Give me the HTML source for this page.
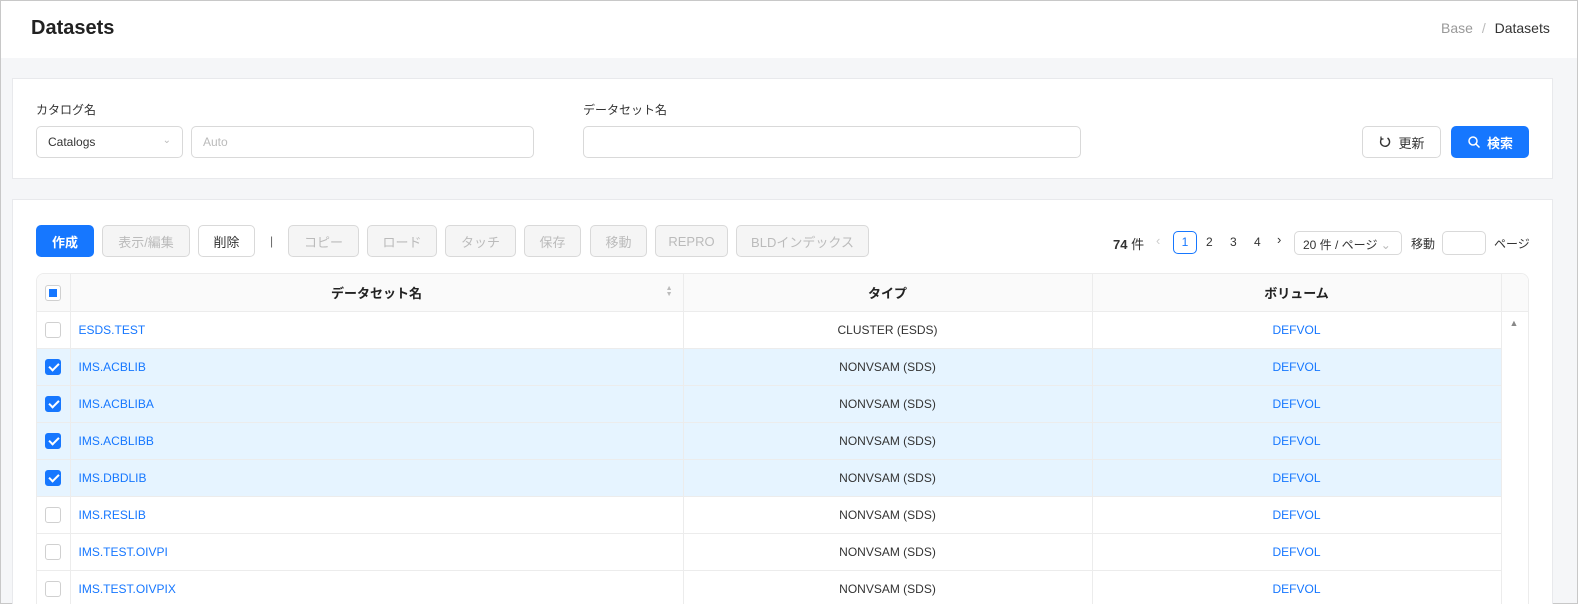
<!DOCTYPE html>
<html style="overflow:hidden;width:1578px;height:604px"><head><meta charset="utf-8"><style>
*{box-sizing:border-box;margin:0;padding:0}
html,body{overflow:hidden}
body{width:1578px;height:604px;background:#f5f6f8;font-family:"Liberation Sans","Noto Sans CJK JP",sans-serif;font-size:13px;color:#333;position:relative;border:1px solid #c8c8c8}
.abs{position:absolute}
.hdr{left:0;top:0;width:1576px;height:57px;background:#fff}
.card{background:#fff;border:1px solid #e8e9ec}
.inp{border:1px solid #d9d9d9;border-radius:5px;background:#fff;height:32px}
.btn{border:1px solid #d9d9d9;border-radius:5px;height:32px;display:flex;align-items:center;justify-content:center;font-size:13px;background:#fff}
.dis{background:#f5f5f5;color:#bbb}
.pri{background:#1677ff;border-color:#1677ff;color:#fff;font-weight:bold}
table{border-collapse:collapse;table-layout:fixed}
td,th{height:37px;border-bottom:1px solid #ececec;border-right:1px solid #ececec;font-size:12px;text-align:center}
th{background:#fafafa;font-weight:bold;color:#222;font-size:13px}
.sel td{background:#e6f4ff}
.n{text-align:left;padding-left:8px;color:#1677ff}
.v{color:#1677ff}
.cb{display:inline-block;width:16px;height:16px;border:1px solid #d0d0d0;border-radius:3px;vertical-align:middle;background:#fff}
.ck{background:#1677ff;border-color:#1677ff;position:relative}
.ck:after{content:"";position:absolute;left:4.5px;top:1.5px;width:4px;height:8px;border:solid #fff;border-width:0 2px 2px 0;transform:rotate(45deg)}
</style></head><body>
<div class="abs hdr"></div>
<div class="abs" style="left:30px;top:16px;font-size:20px;font-weight:bold;color:#222">Datasets</div>
<div class="abs" style="left:1440px;top:19px;font-size:14px;color:#999">Base <span style="margin:0 5px;color:#bbb">/</span> <span style="color:#333">Datasets</span></div>

<div class="abs card" style="left:11px;top:77px;width:1541px;height:101px"></div>
<div class="abs" style="left:35px;top:100px;font-size:12px">カタログ名</div>
<div class="abs inp" style="left:35px;top:125px;width:147px;padding:8px 11px;font-size:12px">Catalogs<span style="float:right;color:#bbb;font-size:10px">&#8964;</span></div>
<div class="abs inp" style="left:190px;top:125px;width:343px;padding:8px 11px;font-size:12px;color:#bbb">Auto</div>
<div class="abs" style="left:582px;top:100px;font-size:12px">データセット名</div>
<div class="abs inp" style="left:582px;top:125px;width:498px"></div>
<div class="abs btn" style="left:1361px;top:125px;width:79px"><svg width="14" height="14" viewBox="0 0 14 14" style="margin-right:6px"><path d="M4 3.5A4.5 4.5 0 1 0 9.5 3" fill="none" stroke="#333" stroke-width="1.4"/><path d="M3 1.5v2.5h2.5" fill="none" stroke="#333" stroke-width="1.2"/></svg>更新</div>
<div class="abs btn pri" style="left:1450px;top:125px;width:78px"><svg width="14" height="14" viewBox="0 0 14 14" style="margin-right:6px"><circle cx="6" cy="6" r="4" fill="none" stroke="#fff" stroke-width="1.5"/><path d="M9 9l3.5 3.5" stroke="#fff" stroke-width="1.5"/></svg>検索</div>

<div class="abs card" style="left:11px;top:198px;width:1541px;height:410px"></div>
<div class="abs btn pri" style="left:35px;top:224px;width:58px">作成</div>
<div class="abs btn dis" style="left:101px;top:224px;width:88px">表示/編集</div>
<div class="abs btn" style="left:197px;top:224px;width:57px">削除</div>
<div class="abs" style="left:269px;top:233px;color:#666;font-size:12px">|</div>
<div class="abs btn dis" style="left:287px;top:224px;width:71px">コピー</div>
<div class="abs btn dis" style="left:366px;top:224px;width:70px">ロード</div>
<div class="abs btn dis" style="left:444px;top:224px;width:71px">タッチ</div>
<div class="abs btn dis" style="left:523px;top:224px;width:57px">保存</div>
<div class="abs btn dis" style="left:589px;top:224px;width:57px">移動</div>
<div class="abs btn dis" style="left:654px;top:224px;width:73px">REPRO</div>
<div class="abs btn dis" style="left:735px;top:224px;width:133px">BLDインデックス</div>

<div class="abs" style="left:1112px;top:233px;font-size:13px"><b>74</b> 件</div>
<div class="abs" style="left:1155px;top:232px;color:#ccc">&lsaquo;</div>
<div class="abs" style="left:1172px;top:230px;width:24px;height:23px;border:1px solid #1677ff;border-radius:5px;color:#1677ff;text-align:center;line-height:21px;font-size:12px">1</div>
<div class="abs" style="left:1205px;top:234px;font-size:12px">2</div>
<div class="abs" style="left:1229px;top:234px;font-size:12px">3</div>
<div class="abs" style="left:1253px;top:234px;font-size:12px">4</div>
<div class="abs" style="left:1276px;top:231px">&rsaquo;</div>
<div class="abs" style="left:1293px;top:230px;width:108px;height:24px;border:1px solid #d9d9d9;border-radius:5px;font-size:12px;padding:4px 8px">20 件 / ページ <span style="color:#bbb">&#8964;</span></div>
<div class="abs" style="left:1410px;top:234px;font-size:12px">移動</div>
<div class="abs" style="left:1441px;top:230px;width:44px;height:24px;border:1px solid #d9d9d9;border-radius:5px"></div>
<div class="abs" style="left:1493px;top:234px;font-size:12px">ページ</div>

<div class="abs" style="left:35px;top:272px;width:1493px;height:332px;border:1px solid #ececec;border-bottom:0;border-radius:8px 8px 0 0;overflow:hidden">
<table style="width:1493px">
<colgroup><col style="width:33px"><col style="width:613px"><col style="width:409px"><col style="width:409px"><col style="width:29px"></colgroup>
<tr><th><span class="cb" style="position:relative"><span style="position:absolute;left:3px;top:3px;width:8px;height:8px;background:#1677ff"></span></span></th><th style="position:relative">データセット名<span style="position:absolute;right:10px;top:12px;font-size:7px;line-height:6px;color:#bbb">▲<br>▼</span></th><th>タイプ</th><th>ボリューム</th><th style="border-right:0"></th></tr>
<tr><td><span class="cb"></span></td><td class="n">ESDS.TEST</td><td>CLUSTER (ESDS)</td><td class="v">DEFVOL</td><td rowspan="8" style="border-right:0;vertical-align:top;background:#fff;position:relative"><span style="position:absolute;left:8px;top:6px;font-size:9px;color:#888">▲</span></td></tr>
<tr class="sel"><td><span class="cb ck"></span></td><td class="n">IMS.ACBLIB</td><td>NONVSAM (SDS)</td><td class="v">DEFVOL</td></tr>
<tr class="sel"><td><span class="cb ck"></span></td><td class="n">IMS.ACBLIBA</td><td>NONVSAM (SDS)</td><td class="v">DEFVOL</td></tr>
<tr class="sel"><td><span class="cb ck"></span></td><td class="n">IMS.ACBLIBB</td><td>NONVSAM (SDS)</td><td class="v">DEFVOL</td></tr>
<tr class="sel"><td><span class="cb ck"></span></td><td class="n">IMS.DBDLIB</td><td>NONVSAM (SDS)</td><td class="v">DEFVOL</td></tr>
<tr><td><span class="cb"></span></td><td class="n">IMS.RESLIB</td><td>NONVSAM (SDS)</td><td class="v">DEFVOL</td></tr>
<tr><td><span class="cb"></span></td><td class="n">IMS.TEST.OIVPI</td><td>NONVSAM (SDS)</td><td class="v">DEFVOL</td></tr>
<tr><td><span class="cb"></span></td><td class="n">IMS.TEST.OIVPIX</td><td>NONVSAM (SDS)</td><td class="v">DEFVOL</td></tr>
</table></div>
</body></html>
